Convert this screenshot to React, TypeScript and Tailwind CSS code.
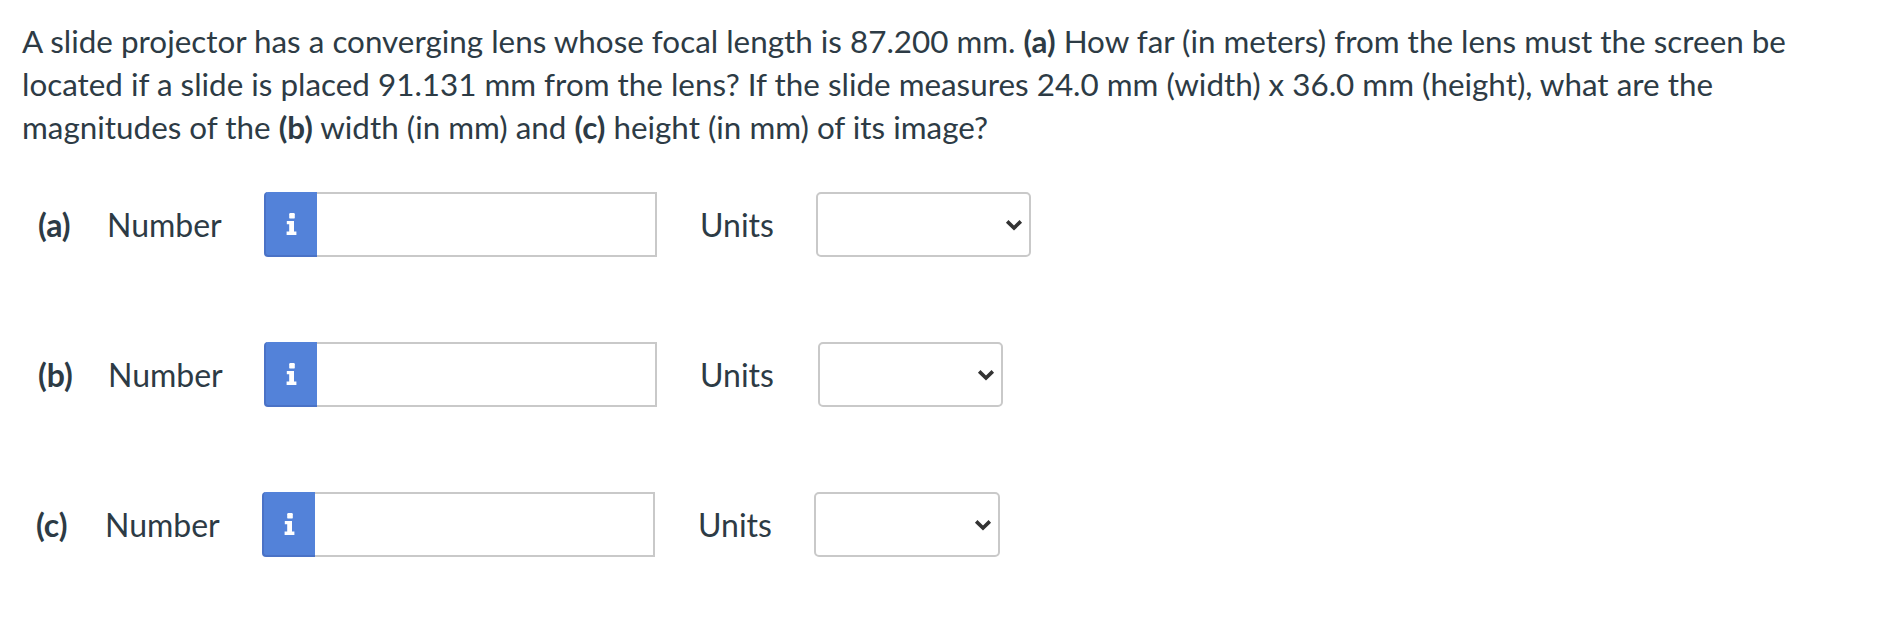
import React from "react";

function InfoIcon() {
  return (
    <svg width="11" height="22" viewBox="0 0 11 22" className="shrink-0">
      <rect x="3.2" y="0" width="5.6" height="5.6" rx="1.2" fill="#fff" />
      <path d="M0.8 8 H8 V18.6 H10.4 V22 H0.6 V18.6 H3.2 V11.2 H0.8 Z" fill="#fff" />
    </svg>
  );
}

function InfoBtn() {
  return (
    <div className="flex h-[65px] w-[53px] items-center justify-center rounded-l-[4px] border-b-2 border-l-2 border-[#4a72c6] bg-[#5382d9]">
      <InfoIcon />
    </div>
  );
}

function Chevron() {
  return (
    <svg width="18" height="12" viewBox="0 0 18 12" className="shrink-0">
      <path d="M2.2 2.4 L9 9 L15.8 2.4" fill="none" stroke="#333" strokeWidth="3.6" strokeLinecap="butt" strokeLinejoin="miter" />
    </svg>
  );
}

function Row({
  label,
  labelW,
  numberW,
  unitsW,
  selectW,
}: {
  label: string;
  labelW: string;
  numberW: string;
  unitsW: string;
  selectW: string;
}) {
  return (
    <div className="flex items-center">
      <span className={"font-bold " + labelW}>{label}</span>
      <span className={numberW}>Number</span>
      <div className="flex h-[65px]">
        <InfoBtn />
        <div className="h-[65px] w-[340px] border-2 border-l-0 border-[#c9c9c9] bg-white" />
      </div>
      <span className={"ml-[43px] " + unitsW}>Units</span>
      <div className={"flex h-[65px] items-center justify-end rounded-[5px] border-2 border-[#c9c9c9] bg-white pr-[6px] " + selectW}>
        <Chevron />
      </div>
    </div>
  );
}

export default function App() {
  return (
    <div
      className="min-h-[620px] w-[1902px] bg-white pl-[22px] pt-[20px] text-[32px] text-[#2d3b45]"
      style={{ fontFamily: 'Lato, "Open Sans", sans-serif' }}
    >
      <p className="w-[1800px] text-[31.4px] leading-[43px]">
        A slide projector has a converging lens whose focal length is 87.200 mm. <span className="font-bold">(a)</span> How far (in meters) from the lens
        must the screen be located if a slide is placed 91.131 mm from the lens? If the slide measures 24.0 mm (width) x
        36.0 mm (height), what are the magnitudes of the <span className="font-bold">(b)</span> width (in mm) and <span className="font-bold">(c)</span> height (in mm) of its image?
      </p>
      <div className="mt-[43px] flex flex-col gap-[85px]">
        <Row label="(a)" labelW="ml-[16px] w-[69px]" numberW="w-[157px]" unitsW="w-[116px]" selectW="w-[215px]" />
        <Row label="(b)" labelW="ml-[16px] w-[70px]" numberW="w-[156px]" unitsW="w-[118px]" selectW="w-[185px]" />
        <Row label="(c)" labelW="ml-[14px] w-[69px]" numberW="w-[157px]" unitsW="w-[116px]" selectW="w-[186px]" />
      </div>
    </div>
  );
}
